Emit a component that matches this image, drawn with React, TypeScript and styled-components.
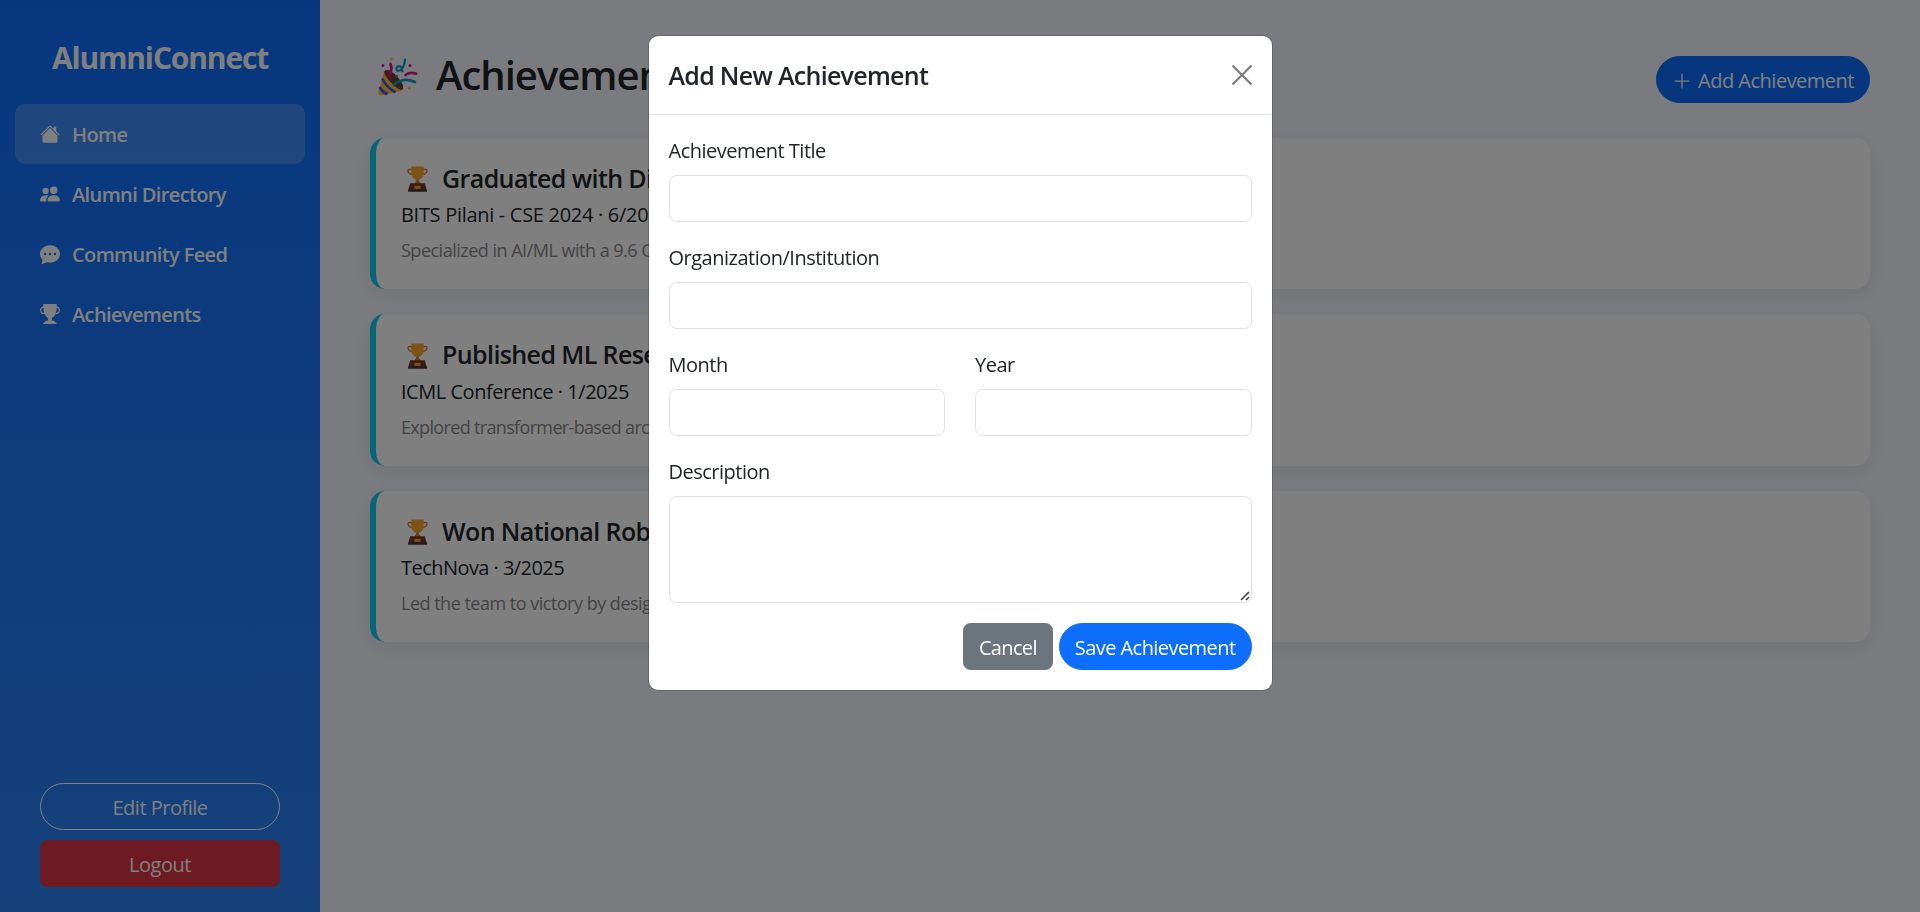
import React from 'react';
import styled, { createGlobalStyle } from 'styled-components';
import { BsHouseFill, BsPeopleFill, BsChatDotsFill, BsTrophyFill, BsPlusLg } from 'react-icons/bs';

const Global = createGlobalStyle`
  * { box-sizing: border-box; }
  html, body { margin: 0; height: 100%; overflow: hidden; }
  body { background: #f5f7fe; color: #212529; font: 400 20px/1.5 'Open Sans', 'Noto Sans', sans-serif; }
  button, input, textarea { font: inherit; letter-spacing: inherit; margin: 0; }
  h1, h2, h5, p { margin: 0; }
`;
const Shell = styled.div`
  display: flex;
  height: 912px;
`;
const Sidebar = styled.aside`
  width: 320px;
  flex: none;
  display: flex;
  flex-direction: column;
  padding: 35px 15px 25px;
  background: linear-gradient(180deg, #0d6efd, #2b82f6);
  color: #fff;
`;
const Brand = styled.h2`
  font-size: 30px;
  font-weight: 700;
  line-height: 45px;
  text-align: center;
  letter-spacing: -1.15px;
  margin-bottom: 24px;
`;
const NavItem = styled.a<{ $active?: boolean }>`
  display: flex;
  align-items: center;
  gap: 12px;
  height: 60px;
  padding: 2px 25px 0;
  border-radius: 10px;
  font-weight: 600;
  letter-spacing: -0.62px;
  background: ${(p) => (p.$active ? 'rgba(255,255,255,0.2)' : 'transparent')};
  svg { width: 20px; height: 20px; flex: none; margin-top: -3px; }
`;
const Account = styled.div`
  margin-top: auto;
  padding: 0 25px;
  display: grid;
  gap: 10px;
`;
const Button = styled.button<{ $bg: string; $pill?: boolean; $line?: string; $track?: number }>`
  display: flex;
  align-items: center;
  justify-content: center;
  gap: 6px;
  height: 47px;
  padding: 2px 15px 0;
  border: 1px solid ${(p) => p.$line ?? p.$bg};
  border-radius: ${(p) => (p.$pill ? '50px' : '7.5px')};
  background: ${(p) => p.$bg};
  color: #fff;
  line-height: 30px;
  white-space: nowrap;
  letter-spacing: ${(p) => p.$track ?? -0.5}px;
  svg { width: 20px; height: 20px; flex: none; }
`;
const Main = styled.main`
  flex: 1;
  padding: 50px;
`;
const TitleBar = styled.header`
  display: flex;
  justify-content: space-between;
  align-items: flex-start;
  height: 57.5px;
  margin-bottom: 30px;
  ${Button} { margin-top: 6px; }
`;
const PageTitle = styled.h1`
  display: flex;
  align-items: center;
  gap: 18px;
  font-size: 40px;
  font-weight: 600;
  line-height: 48px;
  letter-spacing: -1px;
  padding: 1px 0 0 8px;
  svg { margin-top: 3px; }
`;
const Card = styled.article`
  height: 151.5px;
  margin-bottom: 25px;
  padding: 25px;
  border-left: 6px solid #0dcaf0;
  border-radius: 15px;
  background: #fff;
  box-shadow: 0 5px 19px rgba(0, 0, 0, 0.08);
`;
const CardTitle = styled.h5`
  display: flex;
  align-items: center;
  gap: 14px;
  padding-left: 6px;
  font-size: 25px;
  font-weight: 600;
  line-height: 30px;
  letter-spacing: -0.6px;
  margin-bottom: 7.5px;
  svg { margin-top: 3px; }
`;
const CardMeta = styled.p<{ $track: number }>`
  letter-spacing: ${(p) => p.$track}px;
  margin-bottom: 7px;
`;
const CardText = styled.p<{ $track: number }>`
  font-size: 18px;
  line-height: 27px;
  color: #888;
  letter-spacing: ${(p) => p.$track}px;
`;
const Backdrop = styled.div`
  position: fixed;
  inset: 0;
  display: flex;
  justify-content: center;
  align-items: flex-start;
  padding-top: 35px;
  background: rgba(0, 0, 0, 0.5);
`;
const Dialog = styled.section`
  width: 625px;
  border: 1px solid rgba(0, 0, 0, 0.175);
  border-radius: 10px;
  background: #fff;
  background-clip: padding-box;
`;
const DialogHead = styled.header`
  display: flex;
  justify-content: space-between;
  align-items: center;
  height: 79px;
  padding: 0 20px;
  border-bottom: 1px solid #dee2e6;
`;
const DialogTitle = styled.h5`
  padding-top: 2px;
  font-size: 25px;
  font-weight: 600;
  letter-spacing: -0.7px;
`;
const CloseIcon = styled.svg`
  width: 20px;
  height: 20px;
  opacity: 0.5;
`;
const Form = styled.form`
  padding: 20px;
`;
const Pair = styled.div`
  display: grid;
  grid-template-columns: 1fr 1fr;
  gap: 30px;
`;
const Field = styled.label`
  display: flex;
  flex-direction: column;
  margin-bottom: 20px;
`;
const Caption = styled.span`
  padding-top: 1px;
  margin-bottom: 9px;
  letter-spacing: -0.5px;
`;
const Input = styled.input`
  width: 100%;
  height: 47px;
  border: 1px solid #dee2e6;
  border-radius: 7.5px;
`;
const AreaWrap = styled.span`
  position: relative;
  display: flex;
`;
const TextArea = styled.textarea`
  width: 100%;
  height: 107px;
  border: 1px solid #dee2e6;
  border-radius: 7.5px;
  resize: none;
`;
const Grip = styled.svg`
  position: absolute;
  right: 2px;
  bottom: 2px;
  width: 10px;
  height: 10px;
`;
const Actions = styled.div`
  display: flex;
  justify-content: flex-end;
  gap: 6px;
`;

const Popper = () => (
  <svg width="40" height="40" viewBox="0 0 40 40" fill="none" strokeLinecap="round" strokeLinejoin="round">
    <path d="M6 15 L0.3 35.5 Q0 39 3.5 38.5 L24 33.5 Z" fill="#f8c043" />
    <path d="M4.2 21.5 Q8.5 30.5 17.5 35.2 M1.7 30 Q4.5 35.5 9.5 37.2" stroke="#4a55dc" strokeWidth="2.8" strokeLinecap="butt" />
    <path d="M6.2 14.5 Q9 11.5 14 15 Q20 19 24.5 27 Q26.5 32.5 23 33 Q18.5 31.5 12.5 25 Q6 18 6.2 14.5 Z" fill="#6a3c2c" />
    <path d="M12.5 7 Q14.5 12 12 16 Q10.5 18.5 12.5 20.5" stroke="#e3108f" strokeWidth="2.8" />
    <path d="M27 2.5 Q26.5 9 23 13 Q18.5 15 18.5 11.5 Q19 8 22.5 9.5 Q24 11 24.5 14.5" stroke="#0e9bd2" strokeWidth="2.2" />
    <path d="M16 28 Q18 24.5 23 24 Q28 21.5 37 25" stroke="#0e9bd2" strokeWidth="2.7" />
    <path d="M27.5 18 Q31 14.5 38 16.5" stroke="#e3108f" strokeWidth="2.7" />
    <path d="M18.5 19v.1" stroke="#0e9bd2" strokeWidth="2.6" />
    <path d="M5 8.5v.1M32 8.5v.1" stroke="#e3108f" strokeWidth="3" />
    <path d="M13.3 2v.1M31.5 31v.1" stroke="#f8c043" strokeWidth="2.8" />
  </svg>
);
const Trophy = () => (
  <svg width="21" height="26" viewBox="0 0 21 26" fill="none">
    <path d="M5 3.5H2.2Q1 3.5 1 5Q1.2 8 5.5 8.4M16 3.5H18.8Q20 3.5 20 5Q19.8 8 15.5 8.4" stroke="#d9782d" strokeWidth="1.4" />
    <path d="M4.3 0.5H16.7V7.5Q16.5 12 11.8 14V15L13.6 17.5H7.4L9.2 15V14Q4.5 12 4.3 7.5Z" fill="#f9a62b" />
    <path d="M9.2 13.8H11.8V15L13.6 17.5H7.4L9.2 15Z" fill="#d9782d" />
    <path d="M3.2 17.3H17.8L19.3 22.5L20 25.5H1L1.7 22.5Z" fill="#6b3a2e" />
    <path d="M1.5 23.5H19.5L20 25.5H1Z" fill="#552f27" />
    <path d="M7.5 19.8H13.5V22.8H7.5Z" fill="#f9a62b" />
  </svg>
);

const cards = [
  { title: 'Graduated with Distinction', meta: 'BITS Pilani - CSE 2024 · 6/2024', text: 'Specialized in AI/ML with a 9.6 CGPA.', metaTrack: -0.3, textTrack: -0.5 },
  { title: 'Published ML Research Paper', meta: 'ICML Conference · 1/2025', text: 'Explored transformer-based architectures.', metaTrack: -0.47, textTrack: -0.66 },
  { title: 'Won National Robotics Contest', meta: 'TechNova · 3/2025', text: 'Led the team to victory by designing a robot.', metaTrack: -0.55, textTrack: -0.5 },
];

export default function App() {
  return (
    <>
      <Global />
      <Shell>
        <Sidebar>
          <Brand>AlumniConnect</Brand>
          <NavItem $active><BsHouseFill />Home</NavItem>
          <NavItem><BsPeopleFill />Alumni Directory</NavItem>
          <NavItem><BsChatDotsFill />Community Feed</NavItem>
          <NavItem><BsTrophyFill />Achievements</NavItem>
          <Account>
            <Button $bg="transparent" $line="#fff" $pill>Edit Profile</Button>
            <Button $bg="#dc3545">Logout</Button>
          </Account>
        </Sidebar>
        <Main>
          <TitleBar>
            <PageTitle><Popper />Achievements</PageTitle>
            <Button $bg="#0d6efd" $pill><BsPlusLg />Add Achievement</Button>
          </TitleBar>
          {cards.map((c) => (
            <Card key={c.title}>
              <CardTitle><Trophy />{c.title}</CardTitle>
              <CardMeta $track={c.metaTrack}>{c.meta}</CardMeta>
              <CardText $track={c.textTrack}>{c.text}</CardText>
            </Card>
          ))}
        </Main>
      </Shell>
      <Backdrop>
        <Dialog>
          <DialogHead>
            <DialogTitle>Add New Achievement</DialogTitle>
            <CloseIcon viewBox="0 0 16 16"><path d="M1 1L15 15M15 1L1 15" stroke="#000" strokeWidth="1.9" strokeLinecap="round" /></CloseIcon>
          </DialogHead>
          <Form>
            <Field><Caption>Achievement Title</Caption><Input /></Field>
            <Field><Caption>Organization/Institution</Caption><Input /></Field>
            <Pair>
              <Field><Caption>Month</Caption><Input /></Field>
              <Field><Caption>Year</Caption><Input /></Field>
            </Pair>
            <Field>
              <Caption>Description</Caption>
              <AreaWrap>
                <TextArea />
                <Grip viewBox="0 0 10 10"><path d="M1 9L9 1M6 9L9 6" stroke="#444" strokeWidth="1.7" /></Grip>
              </AreaWrap>
            </Field>
            <Actions>
              <Button type="button" $bg="#6c757d" $track={-0.65}>Cancel</Button>
              <Button type="button" $bg="#0d6efd" $pill $track={-0.56}>Save Achievement</Button>
            </Actions>
          </Form>
        </Dialog>
      </Backdrop>
    </>
  );
}
